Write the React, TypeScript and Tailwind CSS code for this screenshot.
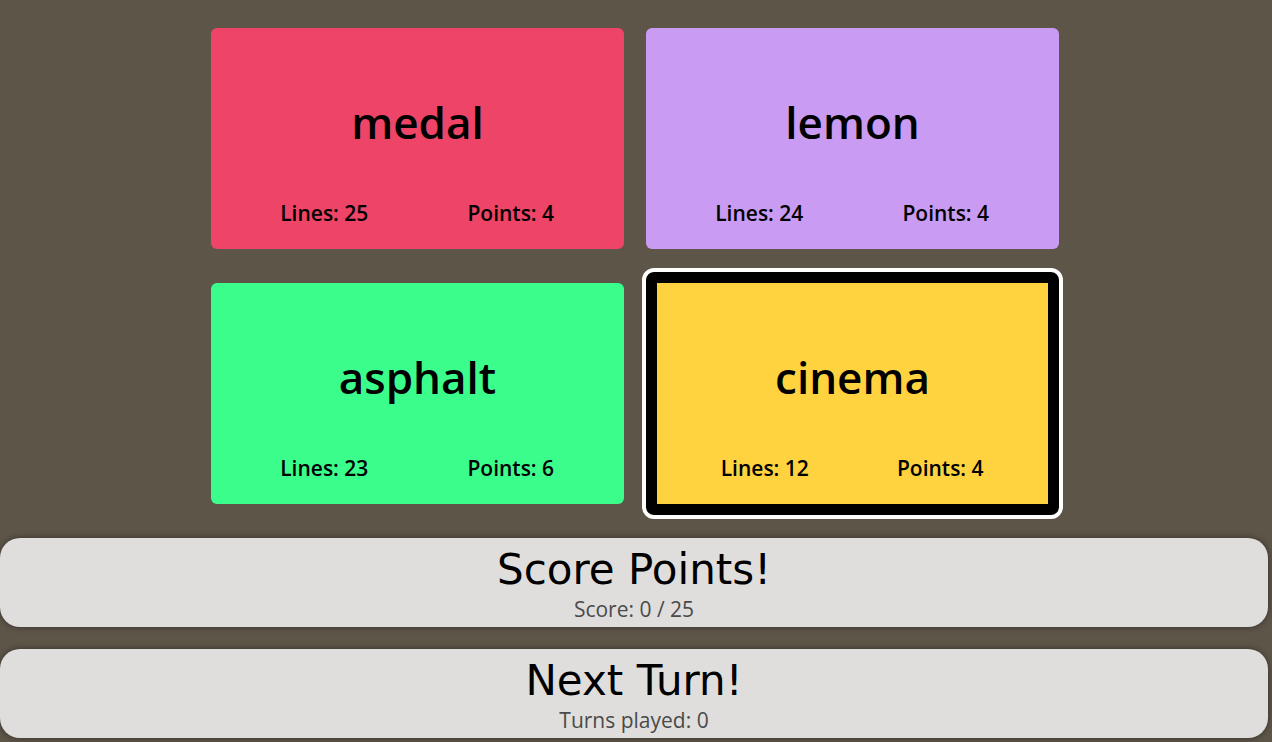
const cards = [
  { word: "medal", lines: 25, points: 4, bg: "bg-[#ee4467]", selected: false },
  { word: "lemon", lines: 24, points: 4, bg: "bg-[#c99bf3]", selected: false },
  { word: "asphalt", lines: 23, points: 6, bg: "bg-[#3bfd8c]", selected: false },
  { word: "cinema", lines: 12, points: 4, bg: "bg-[#ffd33f]", selected: true },
];

const Card = ({ word, lines, points, bg, selected }: (typeof cards)[number]) => {
  return (
    <div
      className={
        selected
          ? "rounded-lg border-[11px] border-black outline-4 outline-white"
          : "rounded-md overflow-hidden"
      }
    >
      <div className={`${bg} h-[221px] flex flex-col px-5 text-black`}>
        <div className="h-[190px] -mt-[1px] flex items-center justify-center text-[44px] font-semibold">
          {word}
        </div>
        <div className="flex text-[21px] font-semibold -mt-[19px]">
          <div className="flex-1 text-center">Lines: {lines}</div>
          <div className="flex-1 text-center">Points: {points}</div>
        </div>
      </div>
    </div>
  );
};

const BigButton = ({ title, sub }: { title: string; sub: string }) => {
  return (
    <button className="mr-1 h-[89px] rounded-[20px] bg-[#dfdedc] shadow-[0_0_6px_rgba(0,0,0,0.45)] flex flex-col items-center justify-center">
      <div
        className="text-[42px] leading-[50px] text-black mt-[2px]"
        style={{ fontFamily: '"DejaVu Sans", sans-serif', fontWeight: 500 }}
      >
        {title}
      </div>
      <div className="text-[21px] leading-[26px] text-[#4a4a4a] mt-[1px]">{sub}</div>
    </button>
  );
};

export default function App() {
  return (
    <div
      className="min-h-[742px] bg-[#5e5549] pt-[28px] flex flex-col"
      style={{ fontFamily: '"Open Sans", sans-serif' }}
    >
      <div className="mx-auto -translate-x-[1px] grid grid-cols-[413px_413px] gap-x-[22px] gap-y-[23px] items-center">
        {cards.map((c) => (
          <Card key={c.word} {...c} />
        ))}
      </div>
      <div className="mt-[23px] flex flex-col gap-[22px]">
        <BigButton title="Score Points!" sub="Score: 0 / 25" />
        <BigButton title="Next Turn!" sub="Turns played: 0" />
      </div>
    </div>
  );
}
